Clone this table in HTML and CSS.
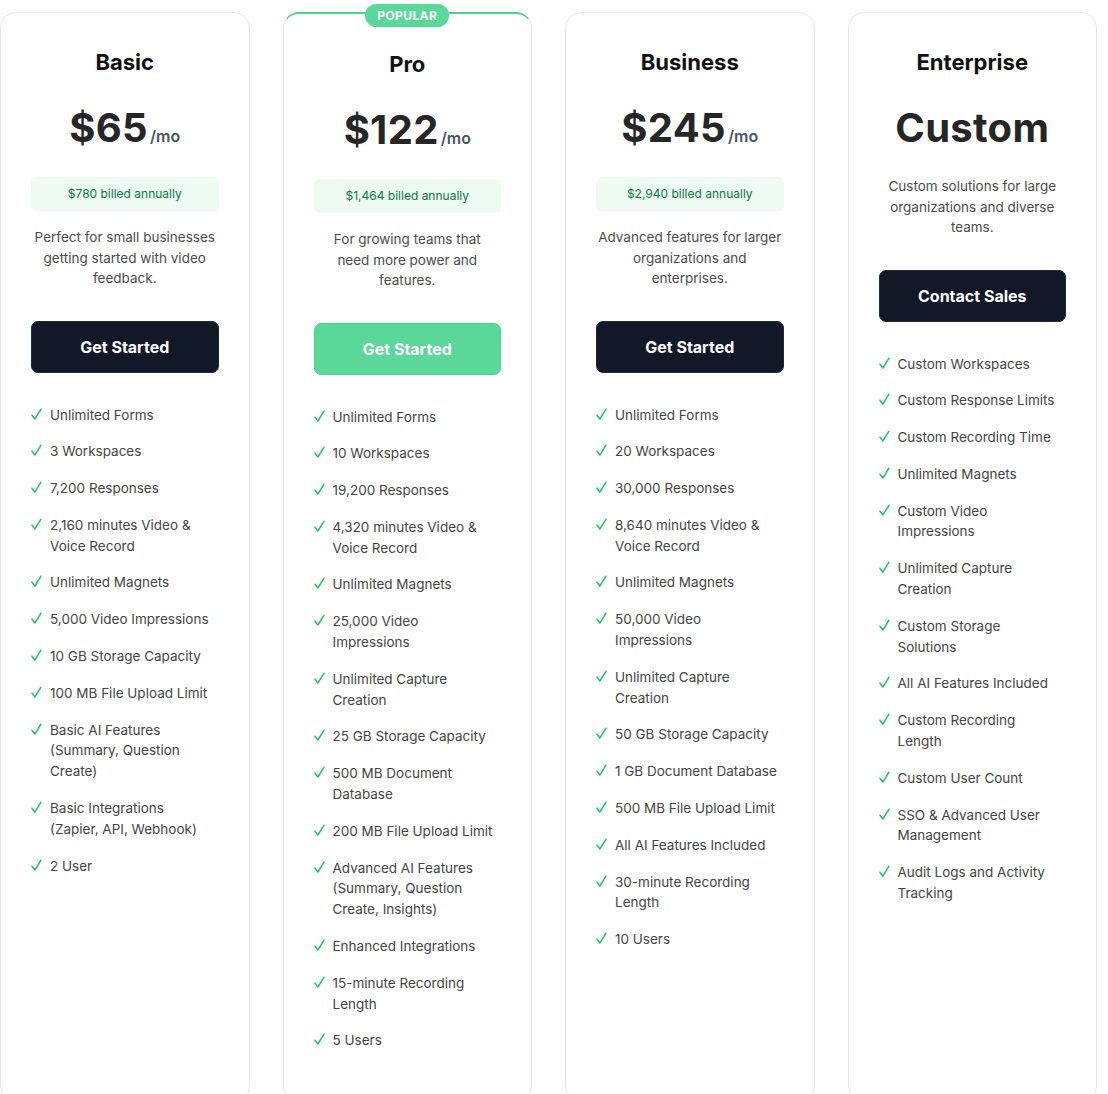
FILE: index.html
```html
<!DOCTYPE html>
<html lang="en">
<head>
<meta charset="utf-8">
<title>Pricing</title>
<link rel="stylesheet" href="styles.css">
</head>
<body>
<svg class="defs" width="0" height="0" aria-hidden="true">
  <symbol id="chk" viewBox="0 0 11 13"><path d="M1 7.2 L3.9 11 L10 1.2" fill="none" stroke="#22c55e" stroke-width="1.5" stroke-linecap="round" stroke-linejoin="round"/></symbol>
</svg>
<main class="plans">
  <section class="card">
    <h2 class="title">Basic</h2>
    <div class="price"><span class="amount">$65</span><span class="per">/mo</span></div>
    <div class="billed">$780 billed annually</div>
    <p class="desc">Perfect for small businesses<br>getting started with video<br>feedback.</p>
    <a class="btn btn-dark">Get Started</a>
    <ul class="features">
      <li><svg class="chk"><use href="#chk"/></svg><span>Unlimited Forms</span></li>
      <li><svg class="chk"><use href="#chk"/></svg><span>3 Workspaces</span></li>
      <li><svg class="chk"><use href="#chk"/></svg><span>7,200 Responses</span></li>
      <li><svg class="chk"><use href="#chk"/></svg><span>2,160 minutes Video &amp;<br>Voice Record</span></li>
      <li><svg class="chk"><use href="#chk"/></svg><span>Unlimited Magnets</span></li>
      <li><svg class="chk"><use href="#chk"/></svg><span>5,000 Video Impressions</span></li>
      <li><svg class="chk"><use href="#chk"/></svg><span>10 GB Storage Capacity</span></li>
      <li><svg class="chk"><use href="#chk"/></svg><span>100 MB File Upload Limit</span></li>
      <li><svg class="chk"><use href="#chk"/></svg><span>Basic AI Features<br>(Summary, Question<br>Create)</span></li>
      <li><svg class="chk"><use href="#chk"/></svg><span>Basic Integrations<br>(Zapier, API, Webhook)</span></li>
      <li><svg class="chk"><use href="#chk"/></svg><span>2 User</span></li>
    </ul>
  </section>

  <section class="card card-popular">
    <span class="badge">POPULAR</span>
    <h2 class="title">Pro</h2>
    <div class="price"><span class="amount">$122</span><span class="per">/mo</span></div>
    <div class="billed">$1,464 billed annually</div>
    <p class="desc">For growing teams that<br>need more power and<br>features.</p>
    <a class="btn btn-green">Get Started</a>
    <ul class="features">
      <li><svg class="chk"><use href="#chk"/></svg><span>Unlimited Forms</span></li>
      <li><svg class="chk"><use href="#chk"/></svg><span>10 Workspaces</span></li>
      <li><svg class="chk"><use href="#chk"/></svg><span>19,200 Responses</span></li>
      <li><svg class="chk"><use href="#chk"/></svg><span>4,320 minutes Video &amp;<br>Voice Record</span></li>
      <li><svg class="chk"><use href="#chk"/></svg><span>Unlimited Magnets</span></li>
      <li><svg class="chk"><use href="#chk"/></svg><span>25,000 Video<br>Impressions</span></li>
      <li><svg class="chk"><use href="#chk"/></svg><span>Unlimited Capture<br>Creation</span></li>
      <li><svg class="chk"><use href="#chk"/></svg><span>25 GB Storage Capacity</span></li>
      <li><svg class="chk"><use href="#chk"/></svg><span>500 MB Document<br>Database</span></li>
      <li><svg class="chk"><use href="#chk"/></svg><span>200 MB File Upload Limit</span></li>
      <li><svg class="chk"><use href="#chk"/></svg><span>Advanced AI Features<br>(Summary, Question<br>Create, Insights)</span></li>
      <li><svg class="chk"><use href="#chk"/></svg><span>Enhanced Integrations</span></li>
      <li><svg class="chk"><use href="#chk"/></svg><span>15-minute Recording<br>Length</span></li>
      <li><svg class="chk"><use href="#chk"/></svg><span>5 Users</span></li>
    </ul>
  </section>

  <section class="card">
    <h2 class="title">Business</h2>
    <div class="price"><span class="amount">$245</span><span class="per">/mo</span></div>
    <div class="billed">$2,940 billed annually</div>
    <p class="desc">Advanced features for larger<br>organizations and<br>enterprises.</p>
    <a class="btn btn-dark">Get Started</a>
    <ul class="features">
      <li><svg class="chk"><use href="#chk"/></svg><span>Unlimited Forms</span></li>
      <li><svg class="chk"><use href="#chk"/></svg><span>20 Workspaces</span></li>
      <li><svg class="chk"><use href="#chk"/></svg><span>30,000 Responses</span></li>
      <li><svg class="chk"><use href="#chk"/></svg><span>8,640 minutes Video &amp;<br>Voice Record</span></li>
      <li><svg class="chk"><use href="#chk"/></svg><span>Unlimited Magnets</span></li>
      <li><svg class="chk"><use href="#chk"/></svg><span>50,000 Video<br>Impressions</span></li>
      <li><svg class="chk"><use href="#chk"/></svg><span>Unlimited Capture<br>Creation</span></li>
      <li><svg class="chk"><use href="#chk"/></svg><span>50 GB Storage Capacity</span></li>
      <li><svg class="chk"><use href="#chk"/></svg><span>1 GB Document Database</span></li>
      <li><svg class="chk"><use href="#chk"/></svg><span>500 MB File Upload Limit</span></li>
      <li><svg class="chk"><use href="#chk"/></svg><span>All AI Features Included</span></li>
      <li><svg class="chk"><use href="#chk"/></svg><span>30-minute Recording<br>Length</span></li>
      <li><svg class="chk"><use href="#chk"/></svg><span>10 Users</span></li>
    </ul>
  </section>

  <section class="card">
    <h2 class="title">Enterprise</h2>
    <div class="price"><span class="amount">Custom</span></div>
    <p class="desc">Custom solutions for large<br>organizations and diverse<br>teams.</p>
    <a class="btn btn-dark">Contact Sales</a>
    <ul class="features">
      <li><svg class="chk"><use href="#chk"/></svg><span>Custom Workspaces</span></li>
      <li><svg class="chk"><use href="#chk"/></svg><span>Custom Response Limits</span></li>
      <li><svg class="chk"><use href="#chk"/></svg><span>Custom Recording Time</span></li>
      <li><svg class="chk"><use href="#chk"/></svg><span>Unlimited Magnets</span></li>
      <li><svg class="chk"><use href="#chk"/></svg><span>Custom Video<br>Impressions</span></li>
      <li><svg class="chk"><use href="#chk"/></svg><span>Unlimited Capture<br>Creation</span></li>
      <li><svg class="chk"><use href="#chk"/></svg><span>Custom Storage<br>Solutions</span></li>
      <li><svg class="chk"><use href="#chk"/></svg><span>All AI Features Included</span></li>
      <li><svg class="chk"><use href="#chk"/></svg><span>Custom Recording<br>Length</span></li>
      <li><svg class="chk"><use href="#chk"/></svg><span>Custom User Count</span></li>
      <li><svg class="chk"><use href="#chk"/></svg><span>SSO &amp; Advanced User<br>Management</span></li>
      <li><svg class="chk"><use href="#chk"/></svg><span>Audit Logs and Activity<br>Tracking</span></li>
    </ul>
  </section>
</main>
</body>
</html>
```

FILE: styles.css
```css
* { box-sizing: border-box; }

html, body {
  margin: 0;
  padding: 0;
  background: #ffffff;
}

body {
  font-family: Inter, "Noto Sans", "Liberation Sans", sans-serif;
  color: #374151;
  overflow: hidden;
}

.defs {
  position: absolute;
  width: 0;
  height: 0;
  overflow: hidden;
}

.plans {
  display: grid;
  grid-template-columns: repeat(4, 249.5px);
  column-gap: 33px;
  padding-top: 12px;
  width: 1099px;
}

.card {
  position: relative;
  min-height: 1090px;
  border: 1px solid #e5e7eb;
  border-radius: 16px;
  padding: 35px 30px 0 30px;
  display: flex;
  flex-direction: column;
  align-items: center;
}

.card-popular {
  border-top: 2px solid #4fd18e;
  padding-top: 36px;
}

.badge {
  position: absolute;
  top: -10px;
  left: 50%;
  transform: translateX(-50%);
  background: #5ad89a;
  color: #ffffff;
  font-size: 12px;
  font-weight: 700;
  letter-spacing: 0.4px;
  line-height: 23px;
  height: 23px;
  padding: 0 12px;
  border-radius: 12px;
}

.title {
  margin: 0;
  font-size: 22px;
  line-height: 28px;
  font-weight: 700;
  color: #111111;
}

.price {
  margin-top: 28px;
  height: 48px;
  display: flex;
  align-items: baseline;
  justify-content: center;
  color: #262626;
}

.amount {
  font-size: 40px;
  line-height: 48px;
  font-weight: 700;
  letter-spacing: 0.3px;
}

.per {
  font-size: 16px;
  font-weight: 600;
  color: #4b5563;
  margin-left: 2px;
}

.billed {
  margin-top: 25px;
  width: 100%;
  height: 34px;
  background: #edfbf3;
  border-radius: 6px;
  color: #0b7a44;
  font-size: 12px;
  line-height: 34px;
  text-align: center;
}

.desc {
  margin: 16px 0 0 0;
  font-size: 13.5px;
  line-height: 20.5px;
  text-align: center;
  color: #4b4b4b;
  white-space: nowrap;
}

.card .price + .desc {
  margin-top: 24px;
}

.btn {
  margin-top: 32px;
  width: 100%;
  height: 52px;
  border-radius: 7px;
  display: flex;
  align-items: center;
  justify-content: center;
  font-size: 16px;
  font-weight: 700;
  color: #ffffff;
  text-decoration: none;
}

.btn-dark {
  background: #111827;
  border: 1px solid #1f2937;
}

.btn-green {
  background: #5ad89a;
  border: 1px solid #4fd18e;
}

.features {
  list-style: none;
  margin: 32px 0 0 0;
  padding: 0;
  width: 100%;
  display: flex;
  flex-direction: column;
  gap: 16px;
}

.features li {
  display: flex;
  align-items: flex-start;
  font-size: 13.5px;
  line-height: 20.8px;
  color: #444444;
  white-space: nowrap;
}

.chk {
  flex: 0 0 11px;
  width: 11px;
  height: 13px;
  margin-top: 3px;
  margin-right: 8px;
}
```
